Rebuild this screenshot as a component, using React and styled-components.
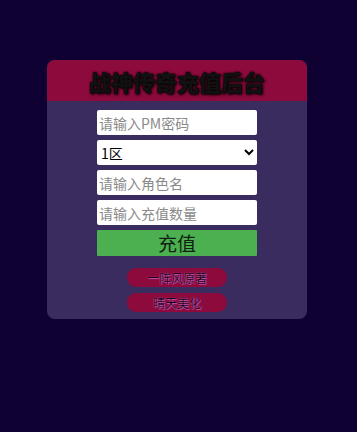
import styled, { createGlobalStyle } from "styled-components";

const GlobalStyle = createGlobalStyle`
  html, body {
    margin: 0;
    padding: 0;
    background: #0f0232;
    font-family: "Noto Sans CJK SC", "Noto Sans", sans-serif;
  }
`;

const Page = styled.div`
  min-height: 432px;
  padding-top: 60px;
  box-sizing: border-box;
`;

const Card = styled.div`
  width: 260px;
  margin: 0 0 0 47px;
  background: #3a2c5e;
  border-radius: 8px;
  overflow: hidden;
  padding-bottom: 7px;
`;

const Header = styled.div`
  height: 41px;
  background: #8c0a3c;
  display: flex;
  align-items: center;
  justify-content: center;
`;

const Title = styled.h1`
  margin: 0;
  font-size: 22px;
  font-weight: 900;
  color: #111;
  text-shadow: 1px 1px 3px #000, 0 0 2px #000, 0 0 1px #000;
`;

const Form = styled.div`
  display: flex;
  flex-direction: column;
  align-items: center;
  gap: 5px;
  padding-top: 9px;
`;

const Input = styled.input`
  width: 160px;
  height: 25px;
  box-sizing: border-box;
  border: none;
  border-radius: 2px;
  padding: 0 2px;
  font-family: inherit;
  font-size: 14px;
  outline: none;
  background: #fff;

  &::placeholder {
    color: #8a8a8a;
  }
`;

const Select = styled.select`
  width: 160px;
  height: 25px;
  box-sizing: border-box;
  border: none;
  border-radius: 2px;
  font-family: inherit;
  font-size: 14px;
  background: #fff;
  color: #000;
`;

const Submit = styled.button`
  width: 160px;
  height: 26px;
  border: none;
  border-radius: 1px;
  background: #4caf50;
  color: #102010;
  font-family: inherit;
  font-size: 19px;
  line-height: 26px;
  padding: 0;
  cursor: pointer;
`;

const Credits = styled.div`
  display: flex;
  flex-direction: column;
  align-items: center;
  gap: 6px;
  margin-top: 12px;
`;

const Badge = styled.div`
  width: 100px;
  height: 19px;
  border-radius: 9px;
  background: #8c0a3c;
  display: flex;
  align-items: center;
  justify-content: center;
  font-size: 12px;
  color: #1a0614;
  text-shadow: 0 0 1px #f070d8, 1px 1px 1px #c050b0;
`;

export default function App() {
  return (
    <Page>
      <GlobalStyle />
      <Card>
        <Header>
          <Title>战神传奇充值后台</Title>
        </Header>
        <Form>
          <Input type="password" placeholder="请输入PM密码" />
          <Select defaultValue="1">
            <option value="1">1区</option>
            <option value="2">2区</option>
          </Select>
          <Input placeholder="请输入角色名" />
          <Input placeholder="请输入充值数量" />
          <Submit>充值</Submit>
        </Form>
        <Credits>
          <Badge>一阵风原著</Badge>
          <Badge>晴天美化</Badge>
        </Credits>
      </Card>
    </Page>
  );
}
